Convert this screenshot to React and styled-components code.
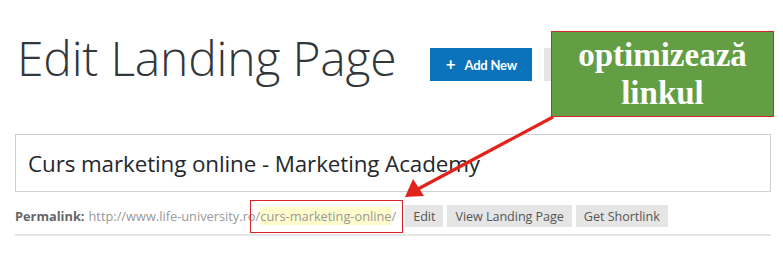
import React from "react";
import styled, { createGlobalStyle } from "styled-components";

const GlobalStyle = createGlobalStyle`
  html, body {
    margin: 0;
    padding: 0;
    background: #ffffff;
    overflow: hidden;
  }
  body {
    font-family: "Open Sans", "Liberation Sans", sans-serif;
    color: #23282d;
  }
`;

const App = () => {
  return (
    <>
      <GlobalStyle />
      <Page>
        <Header>
          <Title>Edit Landing Page</Title>
          <AddNewButton>
            <Plus>+</Plus>
            Add New
          </AddNewButton>
          <SecondaryButton aria-label="Import" />
        </Header>

        <TitleField>Curs marketing online - Marketing Academy</TitleField>

        <PermalinkRow>
          <PermalinkLabel>Permalink:</PermalinkLabel>
          <PermalinkUrl>http://www.life-university.ro/</PermalinkUrl>
          <SlugFrame>
            <Slug>curs-marketing-online</Slug>
            <PermalinkUrl>/</PermalinkUrl>
          </SlugFrame>
          <SmallButton $first>Edit</SmallButton>
          <SmallButton>View Landing Page</SmallButton>
          <SmallButton>Get Shortlink</SmallButton>
        </PermalinkRow>

        <Divider />

        <NextSection>Landing Builder</NextSection>
      </Page>

      <Callout>
        optimizează
        <br />
        linkul
      </Callout>

      <Arrow width="783" height="256" viewBox="0 0 783 256">
        <line x1="553" y1="117" x2="418" y2="189" stroke="#e3221b" strokeWidth="3.2" />
        <polygon points="405,197 413,179 424,196" fill="#e3221b" />
      </Arrow>
    </>
  );
};

const Page = styled.div`
  width: 756px;
  padding: 0 12px 0 15px;
`;

const Header = styled.div`
  display: flex;
  align-items: flex-start;
  padding-top: 25px;
  height: 64px;
`;

const Title = styled.h1`
  margin: 0 0 0 2px;
  font-family: "Open Sans", sans-serif;
  font-weight: 300;
  font-size: 48px;
  line-height: 66px;
  color: #32373c;
  letter-spacing: -0.2px;
`;

const AddNewButton = styled.button`
  display: flex;
  align-items: center;
  justify-content: center;
  gap: 9px;
  margin-left: 34px;
  margin-top: 23px;
  width: 102px;
  height: 33px;
  border: none;
  background: #0b72bc;
  color: #ffffff;
  font-family: Lato, "Open Sans", sans-serif;
  font-weight: 700;
  font-size: 13px;
  letter-spacing: -0.2px;
  padding: 0;
`;

const Plus = styled.span`
  font-size: 17px;
  font-weight: 700;
  line-height: 1;
  margin-top: -2px;
`;

const SecondaryButton = styled.button`
  margin-left: 12px;
  margin-top: 23px;
  height: 33px;
  width: 90px;
  border: none;
  background: #e5e5e5;
`;

const TitleField = styled.div`
  margin-top: 45px;
  box-sizing: border-box;
  height: 58px;
  border: 1px solid #cfcfcf;
  padding: 0 12px;
  display: flex;
  align-items: center;
  font-size: 22.4px;
  color: #23282d;
  letter-spacing: -0.1px;
`;

const PermalinkRow = styled.div`
  display: flex;
  align-items: center;
  margin-top: 7px;
  height: 34px;
  font-size: 12.8px;
`;

const PermalinkLabel = styled.span`
  font-weight: 700;
  color: #666666;
  margin-right: 4px;
`;

const PermalinkUrl = styled.span`
  color: #999999;
`;

const SlugFrame = styled.span`
  display: flex;
  align-items: center;
  box-sizing: border-box;
  height: 33px;
  padding: 0 6px 0 9px;
  margin-left: -10px;
  border: 1px solid #d9232a;
`;

const Slug = styled.span`
  background: #fffbcc;
  color: #999999;
`;

const SmallButton = styled.span`
  display: inline-flex;
  align-items: center;
  height: 22px;
  padding: 0 8px;
  margin-left: ${({ $first }) => ($first ? "2px" : "4px")};
  background: #e5e5e5;
  color: #555555;
  font-size: 12.6px;
  letter-spacing: -0.05px;
`;

const Divider = styled.div`
  height: 2px;
  background: #e6e6e6;
  margin-top: 1px;
`;

const NextSection = styled.div`
  margin-top: 16px;
  padding-left: 34px;
  font-size: 13px;
  color: #555;
`;

const Callout = styled.div`
  position: absolute;
  left: 551px;
  top: 31px;
  width: 223px;
  height: 86px;
  box-sizing: border-box;
  border: 1px solid #d22a24;
  background: #639d44;
  color: #ffffff;
  font-family: "Liberation Serif", "Times New Roman", serif;
  font-weight: 700;
  font-size: 33px;
  line-height: 38px;
  text-align: center;
  padding-top: 4px;
`;

const Arrow = styled.svg`
  position: absolute;
  left: 0;
  top: 0;
  pointer-events: none;
`;

export default App;
